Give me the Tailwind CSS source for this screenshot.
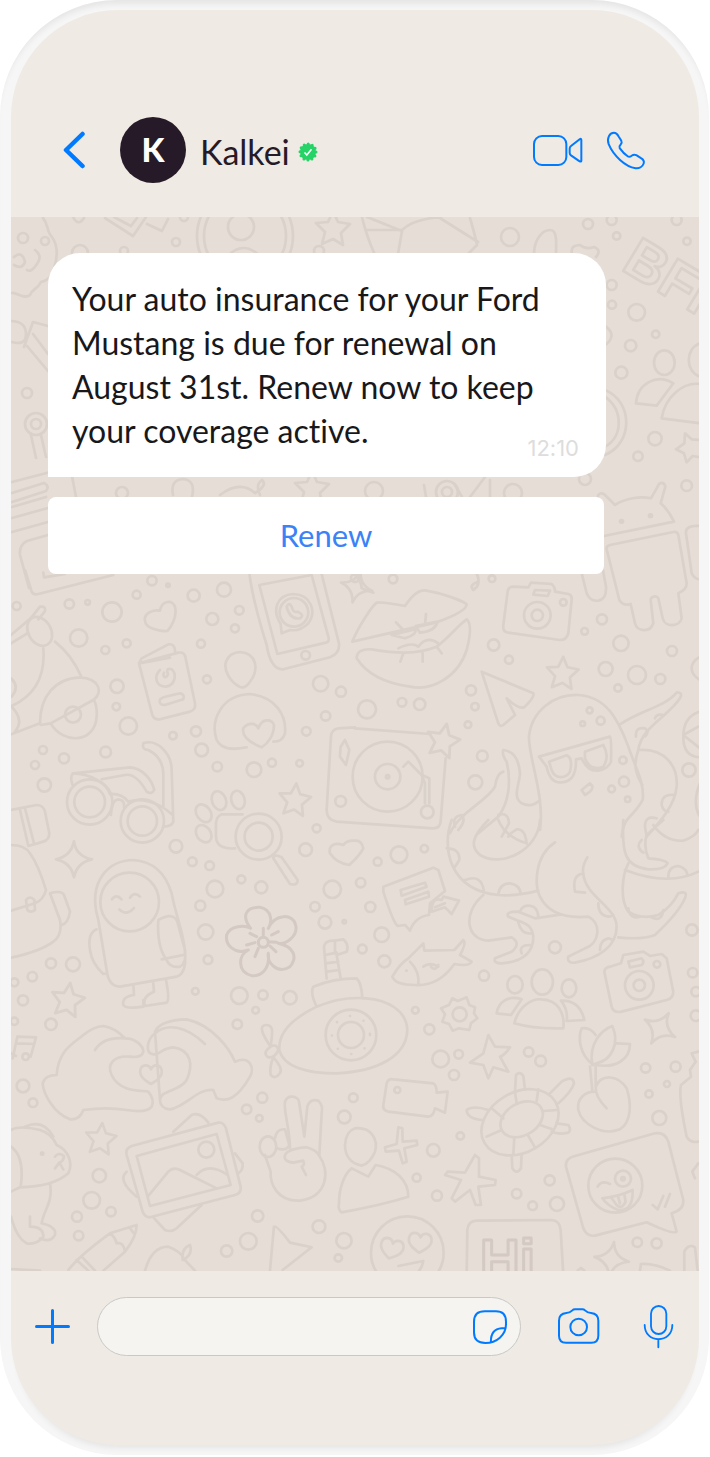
<!DOCTYPE html>
<html lang="en">

<head>
  <title>Kalkei chat</title>
  <meta charset="UTF-8">
  <meta name="viewport" content="width=device-width, initial-scale=1.0">
  <script src="https://cdn.jsdelivr.net/npm/@tailwindcss/browser@4"></script>
</head>

<body class="bg-white font-['Lato',sans-serif] [font-variant-ligatures:none]">
  <div class="mr-px flex min-h-[calc(100vh-2px)] flex-col rounded-[117px] bg-[#f6f6f6] py-[10px] pr-[10px] pl-[11px] shadow-[inset_0_8px_6px_-4px_rgba(0,0,0,0.07)]">
    <div class="flex flex-1 flex-col overflow-hidden rounded-[107px] bg-[#efeae4] shadow-[0_8px_6px_-5px_rgba(0,0,0,0.07)]">

      <header class="flex items-center pt-[107px] pr-[53px] pb-[34px] pl-[52px]">
        <a href="#" aria-label="Back" class="text-[#007aff]">
          <svg class="h-[38px] w-[22px]" viewBox="0 0 22 38" fill="none" stroke="currentColor" stroke-width="4.5" stroke-linecap="round" stroke-linejoin="round"><path d="M19.500 3 3 19l16.500 16"/></svg>
        </a>
        <div class="ml-[35px] flex size-[66px] items-center justify-center rounded-full bg-[#261a28] text-[33px] font-black text-white">K</div>
        <h1 class="ml-3.5 pt-1 text-[34px] leading-10 text-[#261a28]">Kalkei</h1>
        <svg class="mt-1 ml-2 size-5" viewBox="0 0 20 20" role="img" aria-label="Verified">
          <circle cx="10" cy="10" r="8" fill="#25d366" stroke="#25d366" stroke-width="3" stroke-linecap="round" stroke-dasharray="0 4.189"/>
          <path d="m6.5 10.5 2.3 2.5 4.7-5.8" fill="none" stroke="#fff" stroke-width="1.6"/>
        </svg>
        <div class="ml-auto flex items-center gap-[23px] text-[#007aff]">
          <button aria-label="Video call">
            <svg class="h-[33px] w-[51px]" viewBox="532 402 153 99" fill="none" stroke="currentColor" stroke-width="6" stroke-linejoin="round"><rect x="538" y="408" width="97" height="87" rx="24"/><path d="M680 420q0-6-5-2l-26 20q-4 3-4 8v12q0 5 4 8l26 18q5 2 5-2Z"/></svg>
          </button>
          <button aria-label="Call">
            <svg class="h-[41px] w-10" viewBox="754 390 120 122" fill="none" stroke="currentColor" stroke-width="6" stroke-linejoin="round"><path d="M762 432C756 415 764 398 778 398C784 398 788 402 792 409L800 422C802 426 801 430 798 433C794 437 793 440 795 444C802 454 811 463 820 469C825 472 828 469 832 466C836 463 840 463 845 465L859 474C866 478 869 484 867 490C864 499 854 505 843 504C812 500 776 466 762 432Z"/></svg>
          </button>
        </div>
      </header>

      <main class="relative flex-1 overflow-hidden bg-[#e5ddd6] pt-9 pr-[93px] pl-[37px]">
        <!-- doodle wallpaper -->
        <svg class="absolute inset-0 size-full" viewBox="11 217 688 1054" preserveAspectRatio="xMidYMin slice" fill="none" stroke="#dad1ca" stroke-width="2.7" stroke-linecap="round" stroke-linejoin="round" aria-hidden="true">
          <defs>
            <path id="star" d="M0-17 5-6 17-4 8 5 10 17 0 11-11 16-8 4-17-5-5-6Z"/>
            <path id="spark" d="M0-18Q2-3 18 0Q3 3 0 18Q-3 3-18 0Q-3-3 0-18Z"/>
            <path id="heart" d="M0 15C-8 10-18 4-16-6C-14-15-3-15 0-7C3-15 14-15 16-6C18 4 8 10 0 15Z"/>
          </defs>

          <g id="top">
            <path d="M43 218C49 225 46 231 52 237C59 247 57 260 54 268C53 276 47 281 41 282C37 290 33 288 30 295C24 300 17 292 12 293M35 250Q43 256 37 264Q31 273 27 270M14 257Q22 250 25 262Q22 270 14 265"/>
            <path d="M73 217Q78 227 84 218M105 218 133 236 146 217M114 217 131 226 137 218M147 224 162 231 168 219"/>
            <circle cx="245" cy="236" r="48"/><circle cx="245" cy="236" r="41"/><circle cx="241" cy="227" r="13"/>
            <path d="M226 258Q243 238 262 258M362 217Q366 235 375 255M367 230H402Q414 219 441 217M367 217 402 231 398 254M440 218 478 242M470 218Q475 235 477 245L468 254M534 254C534 240 542 230 550 230S556 245 556 254M572 254Q570 245 580 245Q586 250 594 247Q602 250 596 257"/>
            <use href="#star" x="333" y="228"/>
            <text transform="translate(620 269) rotate(31)" font-family="Liberation Sans, sans-serif" font-weight="700" font-size="56">BFF</text>
            <path d="M12 321Q26 322 26 334T12 342M24 347 33 322 48 326M27 346 48 371M33 334 48 354"/>
            <circle cx="36" cy="424" r="11"/><circle cx="36" cy="424" r="5"/>
            <path d="M31 435 36 458M41 435 46 457M12 482 62 469Q70 468 72 476L76 497M12 493 44 483Q50 486 46 491L12 502M12 507 46 497M12 518 48 508M12 532 48 522M48 535 27 541Q19 545 20 555L29 588"/>
            <path d="M220 495Q240 480 255 493Q268 485 262 480Q255 485 260 495M173 495Q170 480 183 479Q196 480 192 497M424 485 426 497M455 485 462 497M485 477 470 497M490 480V497"/>
            <circle cx="447" cy="492" r="11"/><circle cx="447" cy="492" r="5"/><use href="#star" x="312" y="488"/>
          </g>

          <g id="right" transform="translate(590 210) scale(.3333)" stroke-width="8">
            <path d="M45 540C130 575 130 700 45 735M45 560C100 600 100 680 45 710M48 350Q80 375 50 402"/>
            <path d="M138 580C142 520 200 490 250 520L200 587ZM330 640 215 625C225 560 280 515 330 522M330 400C285 415 285 485 330 500"/>
            <ellipse cx="223" cy="458" rx="31" ry="37"/>
            <path d="M330 690 305 688 285 670 283 700 258 718 282 730 290 757 308 738 330 742"/>
            <path d="M42 978 252 935C240 910 230 895 212 880L226 830C222 812 206 818 203 830L183 865C150 858 105 865 75 885L45 855C35 845 22 852 24 862"/>
            <path stroke-width="16" d="M94 934h1M181 917h1"/>
            <path d="M50 1018Q48 1008 60 1005L250 966Q262 963 265 975L290 1120Q290 1140 265 1150L275 1225C270 1250 225 1255 218 1225L205 1165C200 1155 182 1160 182 1170L190 1240C180 1270 140 1265 135 1240L122 1182Q100 1190 88 1170ZM35 1060 48 1130Q50 1168 25 1172Q0 1175-10 1150L-25 1090M330 948Q285 945 288 970L305 1090Q315 1108 330 1108"/>
          </g>

          <g id="upper-left" transform="translate(0 570) scale(.3333)" stroke-width="8">
            <path d="M75 0 95 65Q100 76 115 72L340 15M130 8 132 22 195 12"/>
            <!-- bell -->
            <path d="M33 195 92 145 120 110Q140 108 134 125L115 148M33 220 82 190M130 235C135 300 120 370 35 408M165 215Q215 255 243 318M33 325Q60 350 35 380M33 408Q75 450 45 485M33 493 120 460M120 460C120 380 165 325 240 322C300 325 310 370 280 390L152 460 122 465M152 460C190 525 285 520 290 440Q292 410 282 390"/>
            <ellipse cx="119" cy="184" rx="34" ry="46" transform="rotate(-30 119 184)"/><circle cx="219" cy="434" r="24"/>
            <path d="M437 160C425 130 460 118 480 122C485 92 520 85 526 115C530 140 515 170 502 183C480 185 445 175 437 160Z"/>
            <path d="M417 280 535 248Q552 245 556 260L585 400Q588 420 570 425L480 448Q462 450 457 435ZM417 280 425 265 505 223Q525 220 525 245M417 280 510 263M480 300C460 320 468 350 498 350C528 345 530 310 515 298C500 292 500 305 504 312C500 328 486 322 492 308M490 382 540 370Q555 372 550 388L495 405Q475 405 480 388Z"/>
            <path d="M720 246C775 250 775 305 750 335Q735 358 718 350C690 335 670 300 678 275Q688 248 720 246ZM740 532C700 540 665 540 650 510C630 450 665 375 750 372C830 380 860 440 855 490Q848 515 820 515M785 532C755 520 725 500 730 475C745 455 770 460 775 475C785 445 815 445 822 465C822 495 805 520 785 532Z"/>
            <!-- tablet -->
            <path d="M747 0Q755 80 800 225Q812 300 850 298L990 262Q1020 250 1017 220L962 0M935 15 778 45 832 252 978 218Q990 215 985 200L935 15M845 190 842 162C815 120 830 75 880 72C935 75 950 125 925 160Q900 185 870 180ZM860 110Q870 150 900 145Q915 135 893 125Q880 130 875 110Q868 95 860 110Z"/>
            <circle cx="882" cy="127" r="43"/>
            <!-- glasses -->
            <path d="M218 645Q208 620 220 610L390 592C430 595 455 630 463 660Q455 675 440 665C420 630 400 610 375 615L305 628M218 610C270 610 320 640 330 672Q365 670 385 695C420 685 470 690 518 735M430 520Q425 540 445 540C475 555 492 580 490 620L490 710M430 520C470 505 515 550 515 600L520 755Q515 770 490 770M333 735Q335 690 355 688Q375 690 372 712"/>
            <circle cx="269" cy="696" r="68"/><circle cx="269" cy="696" r="46"/><circle cx="427" cy="753" r="65"/><circle cx="427" cy="753" r="44"/>
            <path d="M33 720 110 705Q130 705 135 725L148 790Q148 810 130 815L85 828M60 720 85 828M75 715 102 820"/>
            <ellipse cx="657" cy="692" rx="21" ry="29" transform="rotate(-20 657 692)"/><ellipse cx="714" cy="690" rx="20" ry="28" transform="rotate(-15 714 690)"/><ellipse cx="611" cy="730" rx="21" ry="29" transform="rotate(-35 611 730)"/><ellipse cx="611" cy="791" rx="21" ry="28" transform="rotate(-35 611 791)"/>
            <path d="M728 733H665Q645 740 648 775V800Q650 840 705 835"/>
            <circle cx="776" cy="800" r="69"/><circle cx="776" cy="800" r="42"/>
            <path d="M820 865Q820 850 845 862L893 930Q893 948 870 942Z"/>
            <use href="#star" transform="translate(885 688) rotate(5) scale(2.8)" stroke-width="2.9"/>
            <!-- turntable -->
            <path d="M1065 472 1015 475Q993 480 993 500L980 720Q980 750 1010 755L1300 775Q1320 775 1322 755L1337 565M1065 475 1290 492"/>
            <path d="M1035 510 1048 540 1038 585 1020 560 1022 530ZM1210 590 1225 575 1265 615 1288 625V700M1265 615 1275 640V700"/>
            <circle cx="1022" cy="694" r="16"/><circle cx="1163" cy="620" r="105"/><circle cx="1163" cy="620" r="38"/><circle cx="1163" cy="620" r="5"/><circle cx="1282" cy="726" r="19"/>
            <use href="#star" transform="translate(1330 510) rotate(12) scale(2.9)" stroke-width="2.9"/>
            <use href="#spark" transform="translate(1070 50) rotate(15) scale(2.7)" stroke-width="2.9"/>
          </g>

          <g id="upper-right" transform="translate(355 570) scale(.3333)" stroke-width="8">
            <!-- lips -->
            <path d="M-8 215C10 170 50 110 65 98Q85 95 150 108Q185 55 215 62C260 70 320 90 335 103Q335 125 245 157L100 190-8 215ZM5 265Q5 235 50 238C120 250 180 255 245 230C285 200 310 165 335 148Q355 165 335 240C310 320 230 365 165 350Q50 335 5 265ZM110 195 182 178Q185 195 150 205ZM182 168 248 155Q240 185 195 188ZM130 235Q170 215 190 230Q215 195 250 220M123 157 145 180M213 132 210 165M145 250 136 275M203 250V275M245 230 260 250"/>
            <!-- camera -->
            <path d="M458 65Q460 50 475 50L520 52 528 38 590 42Q600 50 600 65L640 72Q652 75 650 90L640 190Q635 210 615 210L460 188Q442 185 445 165ZM540 60 585 62 578 78 535 74Z"/>
            <circle cx="547" cy="136" r="40"/><circle cx="547" cy="136" r="17"/><circle cx="625" cy="97" r="10"/>
            <use href="#star" transform="translate(623 308) rotate(2) scale(2.8)" stroke-width="2.9"/>
            <path d="M380 305 535 370Q540 380 510 410 495 422 455 385L480 435 445 465Q435 472 430 460Z"/>
            <!-- octopus -->
            <path d="M555 780C570 680 520 560 522 500C530 420 600 372 670 375C755 380 790 450 820 530C840 590 870 640 863 690Q850 715 820 745Q805 760 800 800M795 463C860 420 930 410 965 368Q985 365 975 385C940 440 860 470 850 540C835 580 840 610 862 645M855 540C930 535 970 590 965 650C960 705 920 750 875 800M555 690Q530 715 500 700C470 680 495 640 495 610Q490 545 445 540Q440 555 455 575C470 640 460 700 430 740L370 790M445 605Q425 610 420 650C400 690 310 730 285 790"/>
            <path d="M552 560 765 500Q770 505 768 575C760 600 705 625 680 565L663 568Q665 635 620 637Q585 640 575 590ZM582 575 635 556Q655 565 645 605C635 625 600 630 590 600ZM690 545 745 525Q765 560 745 590Q705 605 690 565ZM680 660 705 640Q725 655 690 675ZM843 500Q840 470 870 475 885 485 870 500M900 445Q905 430 925 435M960 675Q920 670 920 705 925 725 940 725M905 745Q870 735 870 770L875 800M300 770Q290 740 320 735 335 750 310 780M430 735Q460 725 462 760L440 800"/>
            <path d="M1035 425Q985 440 985 500T1035 562M985 495 1030 470M985 495 1035 535M1035 260Q1010 275 1010 295T1035 330M1035 640Q1010 700 1035 740"/>
            <path d="M365 10Q380 45 355 60Q340 45 370 35M0 15Q20 35 20 55L55 68"/>
          </g>

          <g id="middle-left" transform="translate(0 820) scale(.3333)" stroke-width="8">
            <use href="#spark" transform="translate(222 118) scale(3)" stroke-width="2.8"/>
            <!-- backpack -->
            <path d="M33 75Q75 75 90 100Q115 135 138 210Q130 240 105 250L33 272M150 220Q185 210 192 225L210 275Q205 310 185 315M150 220 180 300Q188 345 160 365Q120 395 33 413M78 240Q90 225 103 240L105 270Q92 280 82 270Z"/>
            <!-- astronaut -->
            <path d="M295 300C260 180 330 120 400 120C470 125 500 170 515 220C525 280 555 350 555 400Q560 460 530 470L360 500Q325 500 320 450ZM290 328Q262 340 270 390 275 430 310 462L320 460M475 300Q520 275 532 305L555 390Q560 430 540 440Q510 445 500 420Q470 380 475 300ZM485 418 550 405M400 495 402 525Q365 530 370 555 380 568 430 560V540M460 490 462 515Q425 530 435 558L500 548Q510 540 498 480M336 238Q348 220 365 238M390 233Q403 213 420 230M358 268Q380 290 402 264"/>
            <circle cx="389" cy="246" r="88"/>
            <use href="#star" transform="translate(204 538) rotate(8) scale(2.9)" stroke-width="2.9"/>
            <!-- flower -->
            <path stroke="#d4cac3" stroke-width="9" d="M752 325C725 290 735 260 780 262C820 270 815 310 805 325C825 280 880 280 887 315C895 350 855 375 835 370C880 380 895 410 870 440C830 465 800 425 805 400C810 440 790 470 755 467C710 455 715 405 745 390C705 405 675 375 680 345C690 315 735 315 752 325ZM790 325V345M815 345 835 335M810 378 828 395M775 385 765 410M765 368 740 375M770 350 750 340M805 365 830 367"/>
            <circle cx="790" cy="367" r="15" stroke="#d4cac3" stroke-width="9"/>
            <path d="M1065 62Q1040 60 1030 75C1000 65 985 80 990 100Q1010 130 1048 135 1080 105 1090 85 1085 60 1065 62Z"/>
            <!-- submarine -->
            <path d="M980 475 972 380Q975 360 1005 362L1030 358Q1048 375 1040 395L1010 405 1022 475M975 405 1010 398M978 430 1015 425M980 455 1018 450M1005 362V400M950 560Q930 520 940 500 1000 475 1070 475 1085 490 1087 535M950 560C870 600 835 640 838 690C850 740 920 760 1010 760C1130 755 1220 710 1222 630C1220 570 1160 540 1100 535 1030 530 990 545 950 560Z"/>
            <circle cx="1053" cy="645" r="76"/><circle cx="1053" cy="645" r="39"/><circle cx="1053" cy="645" r="57" stroke-dasharray="0 44"/>
            <path d="M812 680C785 640 775 615 800 615S815 650 812 680Q830 670 835 690 825 715 805 712 785 700 812 680ZM820 712Q850 745 840 760 825 780 812 765 808 740 820 712Z"/>
          </g>

          <g id="middle-right" transform="translate(355 820) scale(.3333)" stroke-width="8">
            <!-- octopus arms -->
            <path d="M290 0C260 80 280 210 430 225Q480 230 550 212M400 0C350 50 345 80 375 105C440 145 550 90 555 0M430 0Q450 50 515 70 510 25 485 28 465 40 460 50M600 67C535 110 540 200 555 230Q590 300 700 290C740 310 735 370 690 385L640 410Q635 430 660 428C730 415 785 380 785 320C785 260 690 230 685 160Q680 140 697 112M385 225C320 280 335 360 400 362L470 352Q500 370 470 395L420 415Q415 430 440 430C500 425 535 400 535 350C530 305 500 310 460 290Q450 275 490 275L540 295 620 283M805 0C800 100 810 140 880 148Q930 150 938 130 930 118 880 115 865 80 875 45L925 0M895 15Q930 65 985 62 1020 50 1030 30M820 130C800 170 795 240 820 275Q860 300 910 285 950 260 970 220 1000 210 990 235 970 280 900 345 860 360 790 352M810 150Q940 200 1030 155M275 85Q315 85 313 120L300 140M330 180Q380 160 387 215M430 222Q435 190 465 190 495 195 497 220M685 160Q650 165 660 215L690 218M730 250Q730 290 765 290L775 285M735 390Q735 360 760 355L775 360M490 308Q500 345 530 340M500 400Q490 375 525 375M495 275Q505 250 535 260 550 270 550 293M940 170Q940 140 970 138 995 145 998 165M820 265Q825 300 855 290M885 290Q920 310 925 270M860 60Q840 80 865 98"/>
            <!-- note -->
            <path d="M85 200 235 143 250 150 270 213 225 250 222 285Q180 290 165 332L150 315 128 318Q115 310 85 215ZM137 210 210 188 215 200 140 227ZM150 240 220 215 222 230 152 253ZM230 275Q230 230 260 240L265 230 312 242 290 282 270 262ZM240 262 270 250"/>
            <!-- fish -->
            <path d="M112 470Q135 430 160 415L205 370 208 392 298 390 325 360Q335 370 315 405L350 425Q345 440 298 432 250 500 180 495 120 495 112 470ZM165 425Q195 455 190 495M205 440Q225 425 250 440M228 440Q240 455 250 435M154 452h1"/>
            <!-- people -->
            <ellipse cx="562" cy="486" rx="32" ry="38"/><ellipse cx="480" cy="494" rx="23" ry="26"/><ellipse cx="642" cy="505" rx="22" ry="27"/>
            <path d="M478 610C490 560 530 535 560 538C610 540 630 580 625 625Q540 628 478 610ZM425 580C430 545 460 525 500 538L468 585ZM618 542C660 540 680 565 688 600L635 603Q640 570 618 542Z"/>
            <!-- camera -->
            <path d="M748 455Q750 442 765 440L798 430 805 405 865 395 885 408 920 402 935 415 955 515Q955 535 935 540L800 575Q775 580 770 560ZM820 425 860 415Q870 425 860 435L825 442Z"/>
            <circle cx="853" cy="496" r="43"/><circle cx="853" cy="496" r="17"/><circle cx="906" cy="433" r="10"/>
            <path d="M292 535 308 543 335 532 343 555 360 562 357 580 367 595 348 610 343 630 312 625 293 632 282 612 262 605 270 583 258 565 282 555Z"/><circle cx="314" cy="583" r="21"/>
            <use href="#spark" transform="translate(915 625) rotate(30) scale(2.9)" stroke-width="2.8"/>
          </g>

          <g id="lower-left" transform="translate(0 1030) scale(.3333)" stroke-width="8">
            <path d="M38 85 52 20 108 22 92 80M50 40 102 42M33 70 48 78"/><circle cx="77" cy="80" r="10"/>
            <!-- hands -->
            <path d="M170 135C175 60 220 40 250 15Q280-10 310-12C350-5 370 20 375 25C410 25 430 50 430 65Q425 85 390 80C340 75 320 105 335 135C360 190 430 180 445 185Q465 210 455 230 440 250 380 240 320 230 250 240 240 270 210 268C160 250 130 190 128 160Q135 135 170 135ZM285 60Q310 20 375 25M480 210C480 180 540 185 560 150C580 105 575 60 520 52C480 55 485 75 460 73C435 70 440 30 465 10 500-20 555-15 615 42M465 5Q480-30 560-32C640-15 690 60 705 95 750 75 765 115 750 140 710 210 680 215 650 205L640 180C590 175 560 230 510 238Q480 235 480 210Z"/>
            <use href="#heart" transform="translate(453 132) scale(2)" stroke-width="3.9"/>
            <use href="#star" transform="translate(303 325) rotate(5) scale(2.7)" stroke-width="2.9"/>
            <!-- dog -->
            <path d="M33 300Q60 285 120 300 155 310 170 345C205 360 220 400 205 430Q160 470 60 472L33 485M75 290Q130 265 160 320M33 350Q75 380 62 470M150 460C160 520 130 540 125 580Q170 590 165 615 150 640 120 625M90 560V590Q130 590 130 620 110 645 80 640 50 625 33 560M165 380Q175 365 192 378 190 395 178 398L165 415M178 398 190 418"/>
            <path stroke-width="14" d="M126 371h1"/>
            <!-- photos -->
            <path d="M380 375Q375 355 395 348L655 278Q670 275 678 295L722 470Q725 490 705 495L450 562Q435 562 428 545ZM410 378 650 312 692 465 450 528ZM443 500 505 425Q520 410 540 420L650 475M590 435Q625 395 683 435M520 305 575 255Q600 245 625 278M705 370 728 400Q730 420 715 430M380 425Q350 450 410 500M460 562 495 600Q515 608 530 595L605 525"/><circle cx="619" cy="359" r="24"/>
            <!-- victory sign -->
            <path d="M870 355C870 300 850 240 855 215 865 190 895 200 897 215L913 320 922 230Q930 205 955 212 970 225 965 250L958 378C990 420 985 500 900 512C830 515 810 460 812 425L795 375M855 375Q865 355 920 352 950 360 958 378M855 375Q850 395 880 398L910 392Q915 405 905 410L918 435"/>
            <ellipse cx="804" cy="350" rx="25" ry="31"/><path d="M825 325Q830 295 855 298L868 345Q860 365 830 355"/>
            <!-- pencil -->
            <path d="M205 720Q240 675 330 610L410 585Q410 620 375 665L310 722M330 610Q345 620 350 640 370 635 375 665M230 690 265 722M245 680 285 722M388 592 400 608M435 722Q455 650 505 650 545 665 550 685L585 722M548 685Q545 655 570 645 580 675 548 690M810 722 822 590Q830 585 870 638L935 652 848 720M33 717 120 722"/>
          </g>

          <g id="lower-right" transform="translate(355 1030) scale(.3333)" stroke-width="8">
            <path d="M400 15 420 50 465 52Q450 75 435 80L460 125 415 112 400 145 385 105 345 98 385 70Z"/>
            <path d="M95 160Q100 145 115 148L235 160Q245 165 245 188L278 185 270 248 240 235Q235 260 220 260L100 245Q82 240 85 225Z"/><circle cx="127" cy="180" r="9"/>
            <path d="M130 292 142 295 143 335 185 332 187 345 148 355 155 395 143 400 132 362 92 365 90 352 125 342Z"/>
            <path d="M360 375 372 385 372 440 422 450 420 465 370 470 378 525 362 525 345 480 300 515 290 505 318 450 270 435 278 425 330 428Z"/>
            <!-- turtle -->
            <ellipse cx="495" cy="277" rx="123" ry="90" transform="rotate(-30 495 277)"/><ellipse cx="500" cy="268" rx="68" ry="48" transform="rotate(-30 500 268)"/>
            <path d="M480 185 483 135Q495 122 505 138L510 178M585 190 620 155Q655 135 657 160 650 185 610 220M380 270Q335 265 335 240 355 225 400 240M605 280 640 285Q650 300 640 308 610 315 590 305M470 375 472 415Q485 435 498 415L500 372M480 185 485 220M550 178 545 213M608 240 567 243M590 297 555 285M540 352 520 318M475 375 478 322M395 320 440 300M410 235 445 265"/>
            <!-- sprout -->
            <path d="M715 105C670 70 670 20 680-5Q705-10 722 15M712 105C700 40 740 0 772-12C795 40 770 90 725 100ZM785 40 825 42C825 90 780 115 725 105M705 110 712 180M722 110 722 170M755 235Q720 200 722 170C740 130 790 135 815 175C830 220 830 275 795 298C740 320 680 280 670 240 665 205 690 185 720 185"/>
            <path d="M1030 65 1010 70 1022 95 1005 120 1008 140 978 165Q970 200 995 320 1005 340 1030 335M1030 400 1012 425 1020 445"/>
            <!-- chat sticker -->
            <path d="M633 410Q630 385 660 378L900 310Q930 305 940 335L985 510Q988 540 950 550L965 605Q955 615 875 577L720 617Q695 620 685 595ZM728 470Q740 450 765 462M742 505Q790 500 833 480 835 545 790 540 760 530 742 505ZM770 505 785 525Q800 540 812 515L808 492M790 502 795 520M893 525 908 538 925 498M930 530 945 492"/>
            <circle cx="781" cy="467" r="81"/><circle cx="804" cy="446" r="24"/><circle cx="804" cy="446" r="5"/>
            <path d="M0 295C50 290 70 330 60 365Q45 400 20 407C-15 400-30 375-30 345Q-28 305 0 295M-10 415 40 440 62 405C120 415 160 450 160 500Q80 525-40 547-52 540-48 520C-48 470-30 430-10 415"/>
            <circle cx="157" cy="668" r="109"/>
            <use href="#heart" transform="translate(110 655) rotate(15) scale(2.1)" stroke-width="3.8"/><use href="#heart" transform="translate(195 637) rotate(5) scale(2.1)" stroke-width="3.8"/>
            <path d="M130 708 205 693Q200 720 180 735M335 735 337 600Q340 572 365 572L590 570Q615 572 617 600L625 735"/>
            <text x="375" y="745" font-family="Liberation Sans, sans-serif" font-weight="700" font-size="165" stroke="#d4cac3" stroke-width="9">Hi</text>
            <use href="#spark" transform="translate(770 688) rotate(8) scale(2.9)" stroke-width="2.8"/>
            <path d="M855 722 858 702Q900 700 945 722M988 722V665Q1000 640 1020 652L1028 722M668 722 678 714 688 722"/>
          </g>
        </svg>

        <div class="relative rounded-[32px] rounded-bl-none bg-white px-6 py-6">
          <p class="text-[32px] leading-11 text-[#18181b]">Your auto insurance for your Ford Mustang is due for renewal on August 31st. Renew now to keep your coverage active.</p>
          <time datetime="12:10" class="absolute right-[27px] bottom-[15px] font-['Inter',sans-serif] text-[22px] leading-7 text-[#dddddd]">12:10</time>
        </div>
        <div class="relative mt-5 mr-0.5 flex">
          <button class="h-[77px] flex-1 rounded-lg bg-white text-[31px] text-[#3b82f6]">Renew</button>
        </div>
      </main>

      <footer class="flex items-center pt-[26px] pr-[25px] pb-[89px] pl-6 text-[#007aff]">
        <button aria-label="Attach">
          <svg class="size-[35px]" viewBox="0 0 35 35" fill="none" stroke="currentColor" stroke-width="3" stroke-linecap="round"><path d="M17.500 1.500v32M1.500 17.500h32"/></svg>
        </button>
        <div class="ml-[27px] flex h-[59px] min-w-0 flex-1 items-center rounded-[30px] border border-[#c8c8c6] bg-[#f5f4f0] pr-3 pl-6">
          <input type="text" aria-label="Message" class="min-w-0 flex-1 bg-transparent text-2xl text-[#18181b] outline-none">
          <button aria-label="Stickers">
            <svg class="size-9" viewBox="352 208 107 107" fill="none" stroke="currentColor" stroke-width="6"><path d="M390 215H423Q453 215 453 246V254C453 285 425 309 392 309Q358 309 358 278V246Q358 215 390 215ZM452 265H440Q408 267 408 305"/></svg>
          </button>
        </div>
        <button aria-label="Camera" class="ml-9">
          <svg class="h-[37px] w-[43px]" viewBox="604 202 129 111" fill="none" stroke="currentColor" stroke-width="6"><path d="M610 240Q610 219 632 217C642 217 646 213 650 209Q653 206 658 206H680Q685 206 688 209C692 213 696 217 706 217Q728 219 728 240V285Q728 306 707 306H631Q610 306 610 285Z"/><circle cx="669" cy="259" r="25"/></svg>
        </button>
        <button aria-label="Voice message" class="ml-[43px]">
          <svg class="h-[45px] w-[31px]" viewBox="864 195 93 135" fill="none" stroke="currentColor" stroke-width="5.500" stroke-linecap="round"><rect x="888" y="201" width="46" height="84" rx="23"/><path d="M869 258C869 315 952 315 952 258M910 301V325"/></svg>
        </button>
      </footer>
    </div>
  </div>

  <script>
    // small bubbles between the doodles, [x, y, radius] in each group's own units
    const bubbles = {
      'top': [[23, 238, 5], [45, 241, 4], [176, 242, 4], [124, 251, 4], [80, 253, 8], [184, 217, 4], [319, 251, 5], [510, 237, 9], [588, 224, 5], [27, 393, 5], [122, 493, 6], [374, 491, 9], [513, 493, 9], [585, 479, 6], [355, 578, 4]],
      'right': [[65, 30, 15], [80, 78, 11], [291, 94, 11], [260, 30, 15], [65, 225, 15], [66, 284, 12], [140, 307, 25], [197, 373, 11], [122, 407, 17], [94, 488, 18], [195, 686, 20], [144, 739, 14], [290, 827, 16]],
      'upper-left': [[50, 108, 12], [208, 102, 14], [263, 97, 7], [336, 126, 29], [236, 204, 26], [316, 240, 12], [380, 220, 12], [456, 32, 14], [504, 46, 5], [410, 74, 12], [581, 77, 18], [672, 59, 21], [637, 147, 18], [718, 121, 13], [705, 175, 12], [603, 221, 12], [621, 328, 12], [351, 349, 20], [349, 410, 11], [385, 468, 26], [519, 497, 11], [588, 484, 15], [605, 540, 19], [652, 590, 14], [762, 599, 22], [816, 578, 12], [899, 580, 10], [919, 484, 13], [977, 438, 14], [962, 341, 23], [1023, 365, 15], [917, 256, 13], [129, 540, 12], [192, 565, 15], [105, 585, 12], [317, 546, 16], [133, 645, 20]],
      'upper-right': [[114, 27, 13], [411, 26, 10], [416, 225, 17], [462, 269, 12], [741, 148, 15], [689, 184, 10], [798, 220, 23], [951, 243, 15], [752, 297, 21], [846, 315, 27], [916, 327, 15], [789, 354, 11], [348, 361, 15], [360, 410, 11], [36, 418, 27], [141, 397, 13], [194, 403, 17], [339, 464, 10], [382, 558, 16], [361, 637, 21], [704, 421, 9], [737, 452, 12], [683, 461, 7], [804, 571, 11], [807, 635, 15], [770, 657, 10], [818, 688, 8], [1002, 600, 20]],
      'middle-left': [[528, 79, 19], [577, 125, 13], [629, 137, 13], [645, 207, 25], [601, 257, 15], [724, 178, 12], [784, 202, 18], [950, 25, 12], [917, 89, 19], [997, 208, 26], [945, 260, 14], [975, 307, 19], [1033, 305, 5], [617, 336, 23], [624, 419, 13], [586, 514, 10], [718, 527, 25], [789, 525, 14], [870, 533, 20], [767, 571, 10], [712, 613, 14], [153, 430, 15], [219, 433, 21], [97, 470, 14], [43, 487, 12], [69, 541, 15], [43, 604, 11], [153, 613, 17]],
      'middle-right': [[132, 104, 25], [208, 86, 11], [68, 125, 12], [17, 188, 14], [46, 261, 15], [80, 344, 22], [22, 387, 13], [88, 424, 18], [387, 467, 15], [600, 382, 18], [181, 571, 10], [223, 628, 15], [1011, 330, 17], [1013, 458, 14], [1023, 515, 14], [1023, 587, 16]],
      'lower-left': [[69, 168, 19], [99, 218, 13], [298, 437, 20], [275, 511, 25], [231, 560, 15], [333, 545, 14], [236, 617, 14], [787, 203, 15], [740, 238, 14], [778, 265, 10], [773, 558, 17], [745, 634, 25], [680, 663, 17], [957, 590, 19], [1032, 632, 23], [1015, 684, 11], [1033, 261, 19], [1060, 203, 13]],
      'lower-right': [[257, 87, 25], [311, 73, 13], [297, 135, 15], [521, 66, 14], [557, 93, 16], [872, 114, 14], [962, 110, 15], [936, 162, 9], [882, 192, 11], [913, 264, 21], [316, 318, 11], [235, 361, 19], [185, 443, 12], [246, 497, 15], [485, 491, 14], [533, 527, 13], [606, 522, 21], [584, 451, 15], [847, 637, 14], [905, 640, 15]]
    }

    for (const id in bubbles) {
      const group = document.getElementById(id)
      bubbles[id].forEach(([x, y, r]) => {
        const circle = document.createElementNS('http://www.w3.org/2000/svg', 'circle')
        circle.setAttribute('cx', x)
        circle.setAttribute('cy', y)
        circle.setAttribute('r', r)
        group.appendChild(circle)
      })
    }
  </script>
</body>

</html>
